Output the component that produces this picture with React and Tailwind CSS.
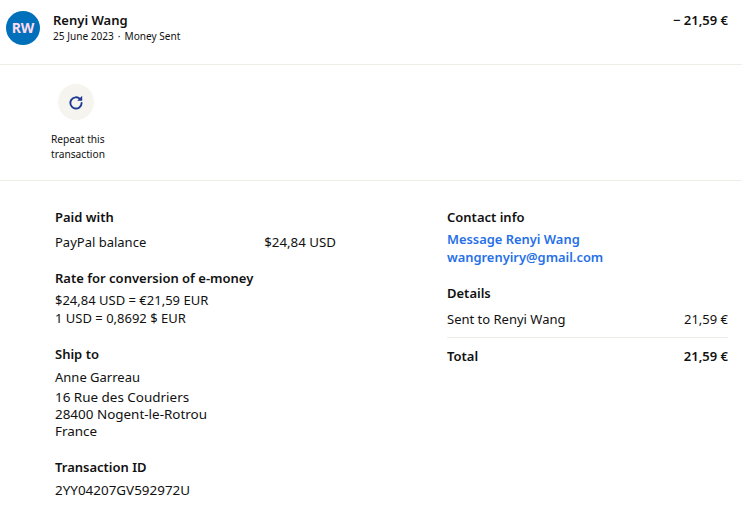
const font = { fontFamily: '"Noto Sans", sans-serif' };

function Heading({ children }) {
  return <h3 className="text-[13px] leading-[18px] font-semibold text-[#111]">{children}</h3>;
}

export default function App() {
  return (
    <div style={font} className="w-[742px] h-[519px] overflow-hidden bg-white text-[13px] text-[#111]">
      {/* Header */}
      <div className="h-[65px] border-b border-[#eeede8] flex items-start pl-[6px] pr-[14px] pt-[11px]">
        <div className="w-[34px] h-[34px] rounded-full bg-[#0070ba] text-[#ffdcf2] flex items-center justify-center text-[14px] leading-none font-bold pb-[1px]">
          RW
        </div>
        <div className="ml-[13px] flex-1">
          <div className="text-[13px] leading-[18px] font-semibold">Renyi Wang</div>
          <div className="text-[10.1px] leading-[15px]">
            25 June 2023<span className="mx-[4px]">·</span>Money Sent
          </div>
        </div>
        <div className="text-[13px] leading-[18px] font-semibold">− 21,59 €</div>
      </div>

      {/* Repeat action */}
      <div className="h-[116px] border-b border-[#eeede8] pl-[51px] pt-[19px]">
        <div className="w-[36px] h-[36px] ml-[7px] rounded-full bg-[#f5f4ef] flex items-center justify-center">
          <svg width="15" height="15" viewBox="0 0 15 15" fill="none">
            <path d="M11 4A5.6 5.6 0 1 0 12.6 8" stroke="#1f3a93" strokeWidth="1.9" strokeLinecap="round" />
            <path d="M13.2 0.8v5H8.2z" fill="#1f3a93" />
          </svg>
        </div>
        <div className="mt-[12px] text-[10.2px] leading-[15px]">
          Repeat this
          <br />
          transaction
        </div>
      </div>

      {/* Details */}
      <div className="flex pt-[27px]">
        <div className="w-[447px] pl-[55px]">
          <Heading>Paid with</Heading>
          <div className="flex w-[281px] justify-between mt-[7px] leading-[18px]">
            <span>PayPal balance</span>
            <span className="text-[13.3px]">$24,84 USD</span>
          </div>
          <div className="mt-[18px]">
            <Heading>Rate for conversion of e-money</Heading>
            <div className="mt-[4px] leading-[18px]">
              $24,84 USD = €21,59 EUR
              <br />1 USD = 0,8692 $ EUR
            </div>
          </div>
          <div className="mt-[18px]">
            <Heading>Ship to</Heading>
            <div className="mt-[5px] leading-[18px]">Anne Garreau</div>
            <div className="mt-[3px] leading-[17px] text-[13.45px]">
              16 Rue des Coudriers
              <br />
              28400 Nogent-le-Rotrou
              <br />
              France
            </div>
          </div>
          <div className="mt-[18px]">
            <Heading>Transaction ID</Heading>
            <div className="mt-[5px] leading-[18px] text-[13.45px]">2YY04207GV592972U</div>
          </div>
        </div>

        <div className="w-[281px]">
          <Heading>Contact info</Heading>
          <div className="mt-[4px] leading-[18px] text-[12.9px] font-semibold text-[#2670e8]">
            Message Renyi Wang
            <br />
            wangrenyiry@gmail.com
          </div>
          <div className="mt-[18px]">
            <Heading>Details</Heading>
          </div>
          <div className="flex justify-between mt-[8px] pb-[9px] leading-[18px] border-b border-[#eeede8]">
            <span>Sent to Renyi Wang</span>
            <span>21,59 €</span>
          </div>
          <div className="flex justify-between mt-[9px] leading-[18px] font-semibold">
            <span>Total</span>
            <span>21,59 €</span>
          </div>
        </div>
      </div>
    </div>
  );
}
